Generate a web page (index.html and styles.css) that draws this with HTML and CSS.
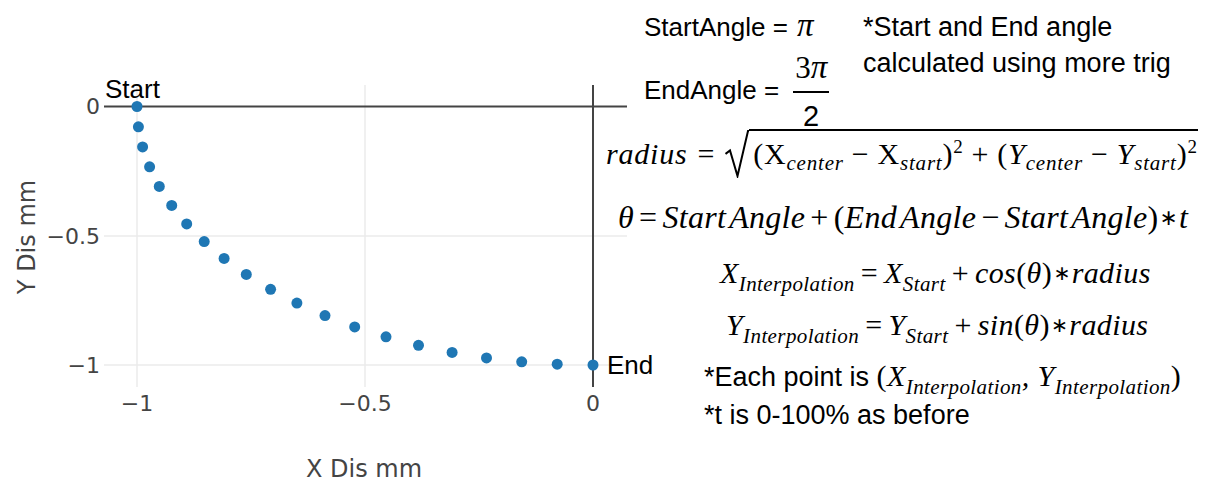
FILE: index.html
```html
<!DOCTYPE html>
<html lang="en">
<head>
<meta charset="utf-8">
<title>Arc interpolation</title>
<link rel="stylesheet" href="styles.css">
</head>
<body>
<div class="page">
  <div class="chart">
    <svg class="plot" width="600" height="484" viewBox="0 0 600 484">
      <g class="grid">
        <line x1="104" y1="236" x2="627" y2="236"/>
        <line x1="104" y1="365" x2="627" y2="365"/>
        <line x1="137" y1="85" x2="137" y2="387"/>
        <line x1="365" y1="85" x2="365" y2="387"/>
      </g>
      <g class="zero">
        <line x1="104" y1="106.5" x2="627" y2="106.5"/>
        <line x1="593" y1="85" x2="593" y2="387"/>
      </g>
      <g class="pts">
        <circle cx="137" cy="106.5" r="5.5"/>
        <circle cx="138.4" cy="126.8" r="5.5"/>
        <circle cx="142.6" cy="146.9" r="5.5"/>
        <circle cx="149.6" cy="166.8" r="5.5"/>
        <circle cx="159.3" cy="186.4" r="5.5"/>
        <circle cx="171.7" cy="205.4" r="5.5"/>
        <circle cx="186.7" cy="223.9" r="5.5"/>
        <circle cx="204.2" cy="241.6" r="5.5"/>
        <circle cx="224.1" cy="258.4" r="5.5"/>
        <circle cx="246.3" cy="274.4" r="5.5"/>
        <circle cx="270.6" cy="289.3" r="5.5"/>
        <circle cx="296.9" cy="303.1" r="5.5"/>
        <circle cx="325.0" cy="315.6" r="5.5"/>
        <circle cx="354.7" cy="326.9" r="5.5"/>
        <circle cx="386.0" cy="336.8" r="5.5"/>
        <circle cx="418.5" cy="345.3" r="5.5"/>
        <circle cx="452.1" cy="352.4" r="5.5"/>
        <circle cx="486.5" cy="357.9" r="5.5"/>
        <circle cx="521.7" cy="361.8" r="5.5"/>
        <circle cx="557.2" cy="364.2" r="5.5"/>
        <circle cx="593" cy="365" r="5.5"/>
      </g>
      <g class="ticks">
        <text x="100" y="113.5" text-anchor="end">0</text>
        <text x="100" y="243.5" text-anchor="end">−0.5</text>
        <text x="100" y="372.5" text-anchor="end">−1</text>
        <text x="137" y="411" text-anchor="middle">−1</text>
        <text x="365" y="411" text-anchor="middle">−0.5</text>
        <text x="593" y="411" text-anchor="middle">0</text>
      </g>
      <text class="axis-title" x="364" y="477" text-anchor="middle">X Dis mm</text>
      <text class="axis-title" transform="translate(35 237) rotate(-90)" text-anchor="middle">Y Dis mm</text>
      <text class="annot" x="105" y="98">Start</text>
      <text class="annot" x="607" y="374">End</text>
    </svg>
  </div>

  <div class="notes">
    <div class="angles">
      <div class="angle-defs">
        <div class="start-def">StartAngle = <i class="pi">π</i></div>
        <div class="end-def">
          <span class="end-label">EndAngle =</span>
          <span class="frac">
            <span class="num">3<i>π</i></span>
            <span class="bar"></span>
            <span class="den">2</span>
          </span>
        </div>
      </div>
      <div class="angle-note">*Start and End angle<br>calculated using more trig</div>
    </div>

    <div class="row math eq-radius"><span class="rw">radius<span class="op up">=</span></span><svg class="radical" width="24" height="48" viewBox="0 0 24 48"><path d="M0.5 24 L5 20.5 L12.5 46 L23 1 L24 1" fill="none" stroke="#000" stroke-width="2" stroke-linejoin="miter"/></svg><span class="radicand"><span class="up">(X</span><sub>center</sub><span class="op up">−</span><span class="up">X</span><sub>start</sub><span class="up">)</span><sup>2</sup><span class="op up">+</span><span class="up">(</span>Y<sub>center</sub><span class="op up">−</span>Y<sub>start</sub><span class="up">)</span><sup>2</sup></span></div>

    <div class="row math eq-theta">θ<span class="op up">=</span>Start<span class="gap"></span>Angle<span class="op up">+</span><span class="up">(</span>End<span class="gap"></span>Angle<span class="op up">−</span>Start<span class="gap"></span>Angle<span class="up">)</span><span class="ast">∗</span>t</div>

    <div class="row math eq-x">X<sub>Interpolation</sub><span class="op up">=</span>X<sub>Start</sub><span class="op up">+</span>cos<span class="up">(</span>θ<span class="up">)</span><span class="ast">∗</span>radius</div>

    <div class="row math eq-y">Y<sub>Interpolation</sub><span class="op up">=</span>Y<sub>Start</sub><span class="op up">+</span>sin<span class="up">(</span>θ<span class="up">)</span><span class="ast">∗</span>radius</div>

    <div class="row note each">*Each point is <span class="inl"><span class="up">(</span>X<sub>Interpolation</sub>, Y<sub>Interpolation</sub><span class="up">)</span></span></div>

    <div class="row note tnote">*t is 0-100% as before</div>
  </div>
</div>
</body>
</html>
```

FILE: styles.css
```css
html, body {
  margin: 0;
  padding: 0;
  background: #fff;
}

.page {
  width: 1207px;
  height: 484px;
  overflow: hidden;
  display: grid;
  grid-template-columns: 600px 1fr;
}

.chart {
  position: relative;
  z-index: 1;
}

.plot {
  display: block;
  overflow: visible;
}

.grid line {
  stroke: #ebebeb;
  stroke-width: 1.5;
}

.zero line {
  stroke: #444;
  stroke-width: 2;
}

.pts circle {
  fill: #1f77b4;
}

.ticks text {
  font-family: "DejaVu Sans", Verdana, sans-serif;
  font-size: 22px;
  fill: #444;
}

.axis-title {
  font-family: "DejaVu Sans", Verdana, sans-serif;
  font-size: 24px;
  fill: #444;
}

.annot {
  font-family: "Liberation Sans", Arial, sans-serif;
  font-size: 26px;
  fill: #000;
}

/* right column */
.notes {
  display: flex;
  flex-direction: column;
  font-family: "Liberation Sans", Arial, sans-serif;
  color: #000;
  white-space: nowrap;
}

.angles {
  display: flex;
  height: 122px;
  padding-left: 44px;
}

.angle-defs {
  width: 219px;
  font-size: 26px;
}

.start-def {
  height: 54px;
  line-height: 54px;
}

.pi {
  font-family: "Liberation Serif", "Times New Roman", serif;
  font-size: 33px;
  line-height: 0;
  margin-left: 2px;
}

.end-def {
  display: flex;
  align-items: flex-start;
  height: 68px;
}

.end-label {
  margin-top: 21px;
  line-height: 30px;
}

.frac {
  display: flex;
  flex-direction: column;
  align-items: center;
  margin-left: 14px;
  font-family: "Liberation Serif", "Times New Roman", serif;
  font-size: 31px;
}

.num {
  line-height: 26px;
}

.num i {
  font-size: 33px;
}

.bar {
  width: 36px;
  height: 1.5px;
  background: #000;
  margin-top: 10px;
}

.den {
  line-height: 32px;
  margin-top: 7px;
  font-family: "Liberation Sans", Arial, sans-serif;
  font-size: 29px;
}

.angle-note {
  font-size: 27px;
  line-height: 36px;
  padding-top: 9px;
}

.row {
  box-sizing: border-box;
}

.math {
  font-family: "Liberation Serif", "Times New Roman", serif;
  font-style: italic;
  letter-spacing: 0.4px;
}

.up {
  font-style: normal;
}

.op {
  display: inline-block;
  margin: 0 6px;
}

.gap {
  display: inline-block;
  width: 3px;
}

.ast {
  font-style: normal;
  font-family: "DejaVu Sans", sans-serif;
  font-size: 0.68em;
  line-height: 0;
  vertical-align: 3px;
  margin: 0 1px;
}

sub, sup {
  line-height: 0;
  font-size: 21px;
}

sub {
  vertical-align: -8px;
}

sup {
  font-style: normal;
  font-size: 19px;
  vertical-align: 11px;
}

.eq-radius {
  height: 64px;
  line-height: 64px;
  font-size: 30px;
  padding-left: 6px;
  letter-spacing: 0.8px;
}

.eq-radius sub {
  vertical-align: -6px;
}

.eq-radius .op {
  margin: 0 8px;
}

.rw {
  letter-spacing: 0.8px;
  line-height: 0;
}

.rw .op {
  margin: 0 10px 0 10px;
}

.radical {
  vertical-align: -14px;
}

.radicand {
  border-top: 2px solid #000;
  padding-top: 6px;
  padding-left: 4px;
}

.eq-theta {
  height: 64px;
  line-height: 62px;
  font-size: 32px;
  padding-left: 18px;
  letter-spacing: 0.3px;
}

.eq-theta .op {
  margin: 0 5px;
}

.eq-x {
  height: 46px;
  line-height: 46px;
  font-size: 30px;
  padding-left: 120px;
}

.eq-y {
  height: 58px;
  line-height: 58px;
  font-size: 30px;
  padding-left: 126px;
}

.note {
  font-size: 27px;
  padding-left: 104px;
}

.each {
  height: 47px;
  line-height: 47px;
}

.inl {
  font-family: "Liberation Serif", "Times New Roman", serif;
  font-style: italic;
  font-size: 30px;
  line-height: 0;
  letter-spacing: 0.4px;
}

.tnote {
  height: 29px;
  line-height: 29px;
}
```
